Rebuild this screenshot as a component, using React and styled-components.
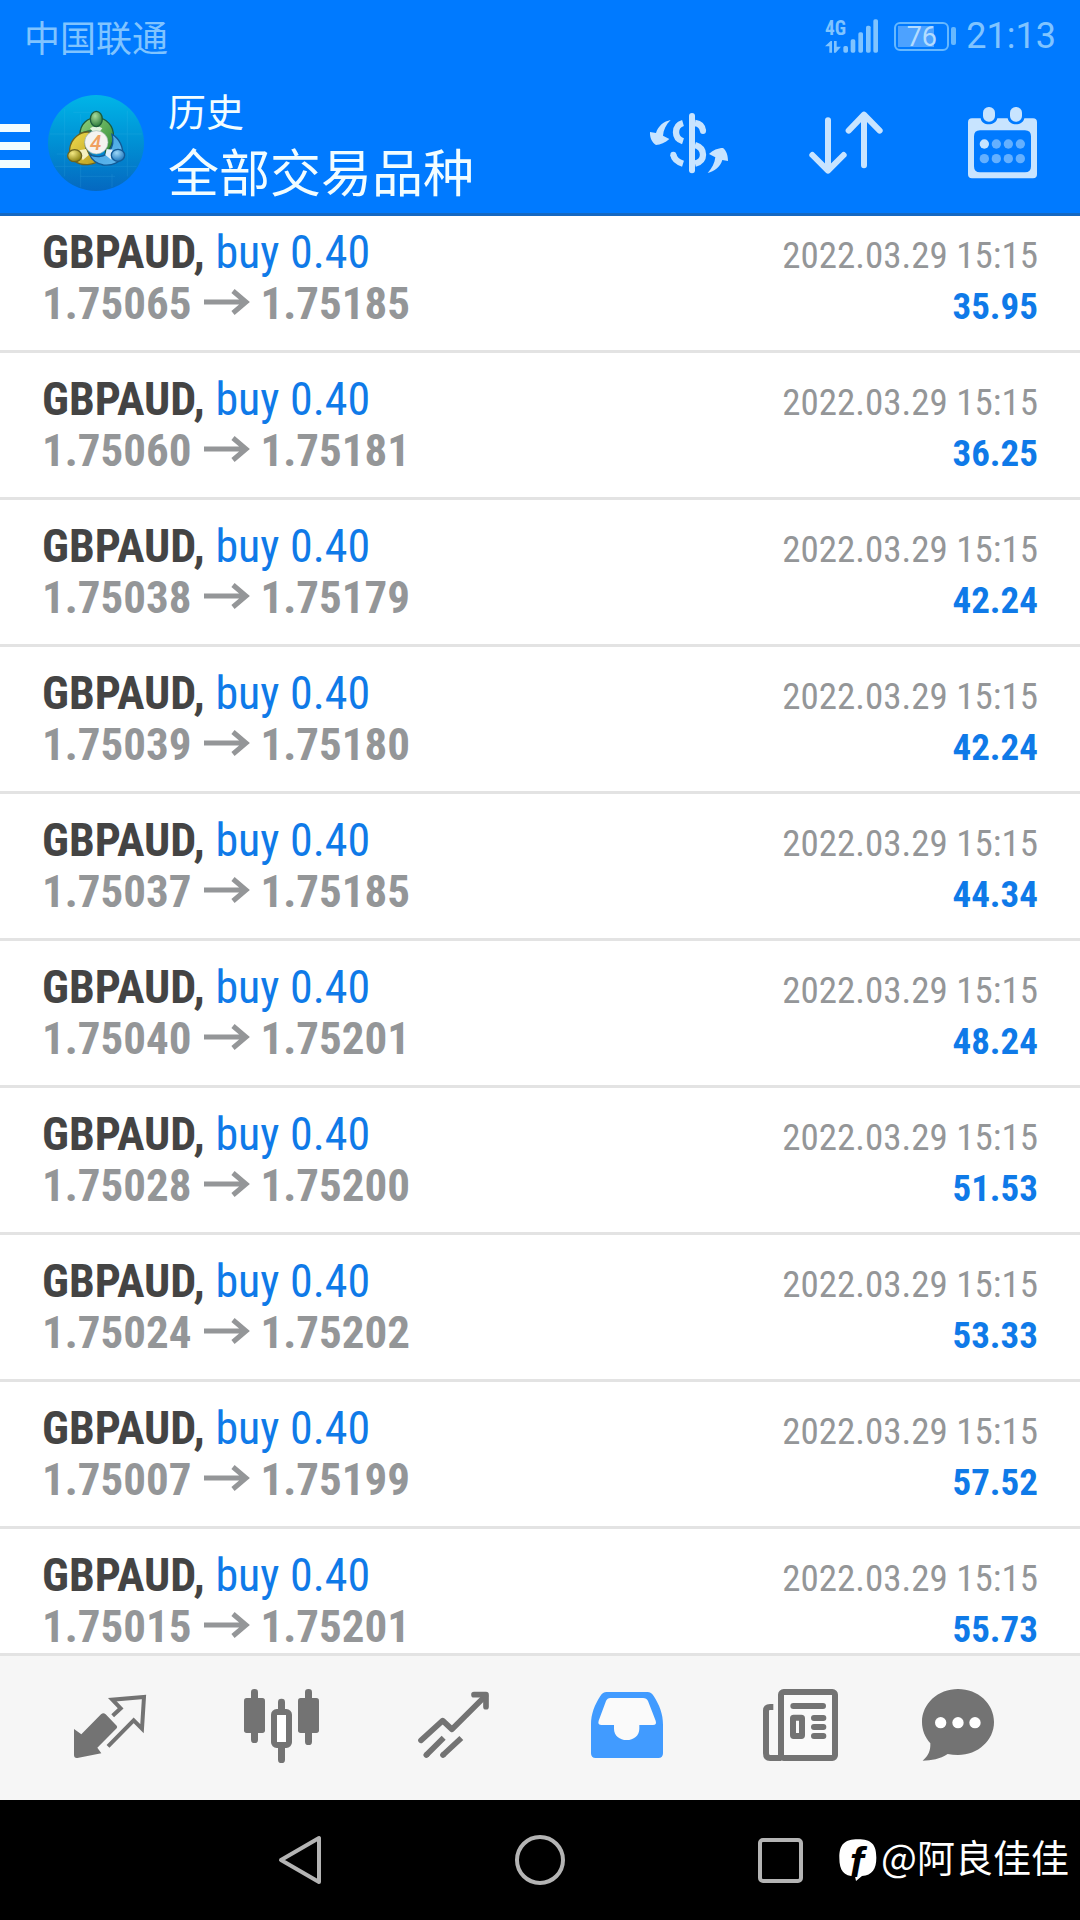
import React from "react";
import styled, { createGlobalStyle } from "styled-components";

const GlobalStyle = createGlobalStyle`
  * {
    box-sizing: border-box;
  }
  body {
    margin: 0;
    font-family: Roboto, "Noto Sans CJK SC", sans-serif;
  }
  button {
    display: flex;
    align-items: center;
    justify-content: center;
    padding: 0;
    border: 0;
    background: none;
    cursor: pointer;
  }
  svg {
    display: block;
    flex: none;
    overflow: visible;
  }
`;

const Screen = styled.div`
  display: flex;
  flex-direction: column;
  width: 100%;
  height: 100vh;
  background-color: #fff;
`;

const Header = styled.header`
  position: relative;
  z-index: 1;
  flex: none;
  background-color: #007aff;
  border-bottom: 3px solid #1668c1;
`;

const StatusBar = styled.div`
  height: 72px;
  padding: 0 24px;
  display: flex;
  align-items: center;
  font-size: 36px;
  color: #80c4ff;
`;

const Carrier = styled.span`
  flex: 1;
`;

const Battery = styled.span`
  width: 55px;
  height: 29px;
  margin: 0 2px 0 15px;
  padding: 2px;
  border: 2px solid #66b8ff;
  border-radius: 6px;
`;

const BatteryLevel = styled.span`
  display: block;
  height: 21px;
  background: linear-gradient(to right, #4da2ff 76%, transparent 76%);
  font-size: 27px;
  line-height: 22px;
  text-align: center;
  color: #b3dcff;
`;

const BatteryTip = styled.span`
  width: 5px;
  height: 18px;
  margin-right: 10px;
  border-radius: 2px;
  background-color: #66b8ff;
`;

const Toolbar = styled.div`
  height: 141px;
  padding-right: 43px;
  display: flex;
  align-items: center;
`;

const MenuButton = styled.button`
  margin-right: 18px;
`;

const Titles = styled.div`
  flex: 1;
  margin-left: 24px;
  padding-top: 8px;
  color: #f2fdff;
`;

const Title = styled.h1`
  margin: 0;
  font-size: 38px;
  font-weight: 400;
  line-height: 56px;
`;

const Subtitle = styled.p`
  margin: 0;
  font-size: 51px;
  line-height: 68px;
`;

const Actions = styled.div`
  display: flex;
  align-items: center;
  gap: 85px;
`;

const HistoryList = styled.ul`
  flex: 1;
  min-height: 0;
  margin: 0;
  padding: 0;
  overflow-y: auto;
  scrollbar-width: none;
  list-style: none;
`;

const Deal = styled.li`
  height: 147px;
  padding: 21px 42px 0;
  display: grid;
  grid-template-columns: 1fr auto;
  grid-auto-rows: 51px;
  align-items: baseline;
  border-bottom: 3px solid #e3e3e3;
  font-family: "Roboto Condensed", "Liberation Sans Narrow", Roboto, sans-serif;
  line-height: 51px;
  color: #949698;
  /* the list is scrolled a little past the first deal's top edge */
  &:first-child {
    margin-top: -10px;
  }
`;

const Symbol = styled.span`
  font-size: 46px;
  font-weight: 700;
  color: #444;
`;

const Side = styled.span`
  font-weight: 400;
  color: #0f7ae8;
`;

const Prices = styled.span`
  display: flex;
  align-items: baseline;
  gap: 12px;
  font-size: 45px;
  font-weight: 700;
`;

const Time = styled.time`
  font-size: 37px;
  text-align: right;
`;

const Profit = styled.span`
  font-size: 37px;
  font-weight: 700;
  text-align: right;
  color: #0f7ae8;
`;

const TabBar = styled.nav`
  flex: none;
  height: 147px;
  padding: 0 24px;
  display: flex;
  border-top: 3px solid #e3e3e3;
  background-color: #f6f6f6;
`;

const Tab = styled.button`
  flex: 1;
  color: ${(props) => (props.$active ? "#419bff" : "#737373")};
`;

const SystemBar = styled.div`
  position: relative;
  flex: none;
  height: 120px;
  padding: 0 calc(100% / 6);
  display: flex;
  background-color: #000;
`;

const SystemButton = styled.button`
  flex: 1;
`;

const Watermark = styled.div`
  position: absolute;
  top: 0;
  right: 11px;
  height: 100%;
  display: flex;
  align-items: center;
  gap: 4px;
  color: #fff;
  pointer-events: none;
`;

const Author = styled.span`
  padding-bottom: 10px;
  font-family: "Noto Sans CJK SC", sans-serif;
  font-size: 38px;
`;

const deals = [
  { open: "1.75065", close: "1.75185", profit: "35.95" },
  { open: "1.75060", close: "1.75181", profit: "36.25" },
  { open: "1.75038", close: "1.75179", profit: "42.24" },
  { open: "1.75039", close: "1.75180", profit: "42.24" },
  { open: "1.75037", close: "1.75185", profit: "44.34" },
  { open: "1.75040", close: "1.75201", profit: "48.24" },
  { open: "1.75028", close: "1.75200", profit: "51.53" },
  { open: "1.75024", close: "1.75202", profit: "53.33" },
  { open: "1.75007", close: "1.75199", profit: "57.52" },
  { open: "1.75015", close: "1.75201", profit: "55.73" },
];

function SignalIcon() {
  return (
    <svg width="54" height="36" viewBox="0 0 162 108" fill="#80c4ff">
      <text
        x="0"
        y="50"
        fontSize="58"
        fontWeight="700"
        fontFamily="'Roboto Condensed', 'Liberation Sans Narrow', Roboto, sans-serif"
      >
        4G
      </text>
      <path d="M0 85L17 69H21V104H13V85ZM27 69H35V86H48L32 104H27Z" />
      <rect x="55" y="84" width="14" height="20" rx="5" />
      <rect x="77" y="64" width="14" height="40" rx="5" />
      <rect x="100" y="43" width="14" height="61" rx="5" />
      <rect x="123" y="23" width="14" height="81" rx="5" />
      <rect x="145" y="4" width="14" height="100" rx="5" />
    </svg>
  );
}

function MenuIcon() {
  return (
    <svg width="30" height="50" viewBox="0 0 30 50" fill="#f2fdff">
      <rect y="6" width="30" height="8" />
      <rect y="24" width="30" height="8" />
      <rect y="42" width="30" height="8" />
    </svg>
  );
}

function Logo() {
  return (
    <svg width="96" height="96" viewBox="54 48 288 288">
      <defs>
        <linearGradient id="sky" x1="0.5" y1="0" x2="0.5" y2="1">
          <stop offset="0" stopColor="#00b5e8" />
          <stop offset="0.5" stopColor="#0090d4" />
          <stop offset="1" stopColor="#0568c0" />
        </linearGradient>
        <linearGradient id="green" x1="0" y1="0" x2="1" y2="1">
          <stop offset="0" stopColor="#8fd07c" />
          <stop offset="1" stopColor="#2f8a35" />
        </linearGradient>
        <linearGradient id="yellow" x1="0" y1="0" x2="1" y2="1">
          <stop offset="0" stopColor="#f0dc50" />
          <stop offset="1" stopColor="#b79a1c" />
        </linearGradient>
        <linearGradient id="blue" x1="0" y1="0" x2="1" y2="1">
          <stop offset="0" stopColor="#3ba0e0" />
          <stop offset="1" stopColor="#63b8ee" />
        </linearGradient>
        <radialGradient id="greenHead" cx="0.4" cy="0.3" r="0.7">
          <stop offset="0" stopColor="#a8dc9c" />
          <stop offset="1" stopColor="#2c7a3a" />
        </radialGradient>
        <radialGradient id="yellowHead" cx="0.35" cy="0.3" r="0.7">
          <stop offset="0" stopColor="#f3e884" />
          <stop offset="1" stopColor="#8f8412" />
        </radialGradient>
        <radialGradient id="blueHead" cx="0.4" cy="0.3" r="0.7">
          <stop offset="0" stopColor="#9bd6f7" />
          <stop offset="1" stopColor="#1f78bd" />
        </radialGradient>
      </defs>
      <circle cx="198" cy="192" r="144" fill="url(#sky)" />
      <path
        d="M60 165H335M75 262H320M104 90V292M292 95V292M152 105V325M246 285V325M130 100H180M150 292H255M80 225H140"
        stroke="#5cc8f0"
        strokeWidth="2"
        opacity="0.2"
      />
      <g strokeWidth="4">
        <path
          d="M150 166C150 134 174 116 199 116C229 116 252 141 250 172C249 196 240 212 226 223C231 196 226 172 199 160C183 152 163 156 150 166Z"
          fill="url(#green)"
          stroke="#1d5c3c"
        />
        <path
          d="M182 160C150 154 122 180 119 210C117 242 142 258 173 257C191 256 207 248 216 236C193 236 174 226 167 206C162 188 168 172 182 160Z"
          fill="url(#yellow)"
          stroke="#6c6420"
        />
        <path
          d="M246 166C268 178 281 206 277 228C272 250 248 261 220 258C198 254 184 240 178 226C201 238 224 234 238 216C249 202 251 184 246 166Z"
          fill="url(#blue)"
          stroke="#125a96"
        />
        <path d="M180 148L199 138L217 148L208 160H190Z" fill="#dff2dc" />
        <path d="M148 214L168 210L176 228L158 244Z" fill="#f5f0c0" />
        <path d="M248 212L230 210L226 228L244 242Z" fill="#dff0fb" />
        <ellipse cx="199" cy="120" rx="18" ry="23" fill="url(#greenHead)" stroke="#1d5c3c" />
        <ellipse cx="134" cy="230" rx="21" ry="18" fill="url(#yellowHead)" stroke="#6c6420" />
        <ellipse cx="264" cy="229" rx="20" ry="18" fill="url(#blueHead)" stroke="#125a96" />
      </g>
      <circle cx="199" cy="190" r="35" fill="#f4f3f0" stroke="#9db8b0" strokeWidth="2" />
      <text
        x="197"
        y="212"
        fontSize="62"
        fontWeight="500"
        fontStyle="italic"
        fontFamily="Roboto, sans-serif"
        textAnchor="middle"
        fill="#f0a060"
      >
        4
      </text>
    </svg>
  );
}

function CurrencyIcon() {
  return (
    <svg width="74" height="64" viewBox="153 330 222 192" fill="#c8e4ff">
      <rect x="270" y="336" width="18" height="181" rx="9" />
      <path
        d="M252 366C238 370 231 381 231 394C231 407 239 417 252 421M223 461C225 475 236 483 252 488M288 366C302 368 311 376 312 390M288 432C304 437 312 447 312 461C312 476 303 484 288 488"
        fill="none"
        stroke="#c8e4ff"
        strokeWidth="19"
      />
      <circle cx="312" cy="390" r="9" />
      <circle cx="223" cy="461" r="9" />
      <path d="M215 357C195 361 177 375 171 396L153 393C152 410 159 425 171 432C184 432 199 425 211 414L192 404C193 387 201 371 215 357Z" />
      <path d="M326 516C346 511 364 498 370 477L387 480C387 463 382 448 372 441C357 441 341 448 330 459L349 469C347 487 339 501 326 516Z" />
    </svg>
  );
}

function SortIcon() {
  return (
    <svg width="74" height="64" viewBox="627 335 222 192" fill="none" stroke="#c8e4ff" strokeWidth="18" strokeLinecap="round" strokeLinejoin="round">
      <path d="M684 363V513M637 467L684 514L731 467M792 498V346M746 394L792 346L839 394" />
    </svg>
  );
}

function CalendarIcon() {
  const columns = [1153, 1189, 1225, 1261];

  return (
    <svg width="69" height="72" viewBox="1104 320 207 216" fill="#c8e4ff">
      <path
        fillRule="evenodd"
        d="M1116 354H1142C1144 366 1154 372 1166 372C1178 372 1189 366 1192 354H1223C1226 366 1236 372 1248 372C1260 372 1270 366 1273 354H1299Q1311 354 1311 366V522Q1311 534 1299 534H1116Q1104 534 1104 522V366Q1104 354 1116 354ZM1140 390Q1122 390 1122 408V498Q1122 516 1140 516H1275Q1293 516 1293 498V408Q1293 390 1275 390Z"
      />
      <rect x="1149" y="320" width="36" height="44" rx="17" />
      <rect x="1230" y="320" width="36" height="44" rx="17" />
      {columns.map((x, i) => (
        <g key={x}>
          <circle cx={x} cy="431" r="14" fill={i === 0 ? "#c8e4ff" : "#64b0ff"} />
          <circle cx={x} cy="475" r="14" fill="#64b0ff" />
        </g>
      ))}
    </svg>
  );
}

/* the blank strip under the arrow lifts it to the middle of the digits */
function ArrowIcon() {
  return (
    <svg width="45" height="29" viewBox="0 0 45 29" fill="none" stroke="#949698" strokeWidth="5">
      <path d="M0 12H42M29 1L42 12L29 23" />
    </svg>
  );
}

const tabs = [
  {
    label: "行情",
    viewBox: "66 144 288 240",
    icon: (
      <>
        <path d="M102 267L124 283L183 223Q190 216 197 223L230 257Q233 261 230 265L172 323L184 340L112 354Q102 355 102 345Z" />
        <path
          d="M218 227L242 205L217 179L312 171L306 266L281 241L204 319"
          fill="none"
          stroke="currentColor"
          strokeWidth="12"
        />
      </>
    ),
  },
  {
    label: "图表",
    viewBox: "582 144 288 240",
    icon: (
      <>
        <rect x="633" y="147" width="21" height="162" rx="10" />
        <rect x="612" y="174" width="63" height="105" rx="8" />
        <rect x="795" y="147" width="21" height="168" rx="10" />
        <rect x="774" y="174" width="63" height="105" rx="8" />
        <rect x="714" y="176" width="21" height="46" rx="10" />
        <rect x="714" y="305" width="21" height="64" rx="10" />
        <rect x="702" y="216" width="45" height="99" rx="8" fill="#fff" stroke="currentColor" strokeWidth="18" />
      </>
    ),
  },
  {
    label: "交易",
    viewBox: "1098 144 288 240",
    icon: (
      <g fill="none" stroke="currentColor" strokeWidth="17" strokeLinejoin="round">
        <path d="M1143 301L1208 242L1236 268L1336 168" strokeLinecap="round" />
        <path d="M1302 164H1338V200" strokeLinecap="round" />
        <path d="M1159 345L1211 293M1209 345L1264 294" />
        <path d="M1159 345L1160 344M1209 345L1210 344" strokeLinecap="round" />
      </g>
    ),
  },
  {
    label: "历史",
    active: true,
    viewBox: "54 144 288 240",
    icon: (
      <>
        <path d="M140 156H262Q274 156 281 168C298 195 309 221 309 254V340Q309 354 295 354H107Q93 354 93 340V254C93 221 104 195 121 168Q128 156 140 156Z" />
        <path
          d="M151 174H249Q260 174 264 183L287 242Q291 255 279 255H238V266C238 287 221 300 200 300C179 300 162 287 162 266V255H125Q112 255 116 242L138 183Q142 174 151 174Z"
          fill="#fafafa"
        />
      </>
    ),
  },
  {
    label: "新闻",
    viewBox: "570 144 288 240",
    icon: (
      <g fill="none" stroke="currentColor" strokeWidth="18">
        <path d="M664 354H630Q618 354 618 340V212Q618 201 630 201H640" />
        <rect x="663" y="156" width="162" height="198" rx="8" fill="#fafafa" />
        <path d="M700 198H789M762 234H790M762 261H790M762 288H790" strokeLinecap="round" />
        <rect x="699" y="233" width="27" height="55" rx="2" />
      </g>
    ),
  },
  {
    label: "消息",
    viewBox: "1086 144 288 240",
    icon: (
      <>
        <path d="M1194 147C1254 147 1302 191 1302 246C1302 301 1254 345 1194 345Q1178 345 1163 342C1140 357 1114 362 1088 362C1105 348 1112 332 1111 310C1095 292 1086 270 1086 246C1086 191 1134 147 1194 147Z" />
        <g fill="#fff">
          <circle cx="1142" cy="248" r="17" />
          <circle cx="1194" cy="248" r="17" />
          <circle cx="1245" cy="248" r="17" />
        </g>
      </>
    ),
  },
];

function StatusRow() {
  return (
    <StatusBar>
      <Carrier>中国联通</Carrier>
      <SignalIcon />
      <Battery>
        <BatteryLevel>76</BatteryLevel>
      </Battery>
      <BatteryTip />
      <span>21:13</span>
    </StatusBar>
  );
}

function App() {
  return (
    <Screen>
      <GlobalStyle />
      <Header>
        <StatusRow />
        <Toolbar>
          <MenuButton aria-label="菜单">
            <MenuIcon />
          </MenuButton>
          <Logo />
          <Titles>
            <Title>历史</Title>
            <Subtitle>全部交易品种</Subtitle>
          </Titles>
          <Actions>
            <button aria-label="品种">
              <CurrencyIcon />
            </button>
            <button aria-label="排序">
              <SortIcon />
            </button>
            <button aria-label="日期">
              <CalendarIcon />
            </button>
          </Actions>
        </Toolbar>
      </Header>
      <HistoryList>
        {deals.map((deal) => (
          <Deal key={deal.open}>
            <Symbol>
              GBPAUD, <Side>buy 0.40</Side>
            </Symbol>
            <Time>2022.03.29 15:15</Time>
            <Prices>
              {deal.open}
              <ArrowIcon />
              {deal.close}
            </Prices>
            <Profit>{deal.profit}</Profit>
          </Deal>
        ))}
      </HistoryList>
      <TabBar>
        {tabs.map((tab) => (
          <Tab key={tab.label} $active={tab.active} aria-label={tab.label}>
            <svg width="96" height="80" viewBox={tab.viewBox} fill="currentColor">
              {tab.icon}
            </svg>
          </Tab>
        ))}
      </TabBar>
      <SystemBar>
        <SystemButton aria-label="返回">
          <svg width="44" height="50" viewBox="0 0 44 50" fill="none" stroke="#b4b4b4" strokeWidth="4" strokeLinejoin="round">
            <path d="M3 25L41 3V47Z" />
          </svg>
        </SystemButton>
        <SystemButton aria-label="主屏幕">
          <svg width="50" height="50" viewBox="0 0 50 50" fill="none" stroke="#b4b4b4" strokeWidth="4">
            <circle cx="25" cy="25" r="23" />
          </svg>
        </SystemButton>
        <SystemButton aria-label="最近任务">
          <svg width="45" height="45" viewBox="0 0 45 45" fill="none" stroke="#b4b4b4" strokeWidth="4">
            <rect x="2" y="2" width="41" height="41" rx="3" />
          </svg>
        </SystemButton>
        <Watermark>
          <svg width="38" height="42" viewBox="355 150 114 126" fill="#fff">
            <path d="M412 151C452 151 467 166 467 206C467 240 455 258 424 261L406 276L403 262C369 261 356 244 356 206C356 166 372 151 412 151Z" />
            <text
              x="408"
              y="264"
              fontSize="126"
              fontStyle="italic"
              fontWeight="700"
              fontFamily="'Liberation Sans', sans-serif"
              textAnchor="middle"
              fill="#000"
            >
              f
            </text>
          </svg>
          <Author>@阿良佳佳</Author>
        </Watermark>
      </SystemBar>
    </Screen>
  );
}

export default App;
